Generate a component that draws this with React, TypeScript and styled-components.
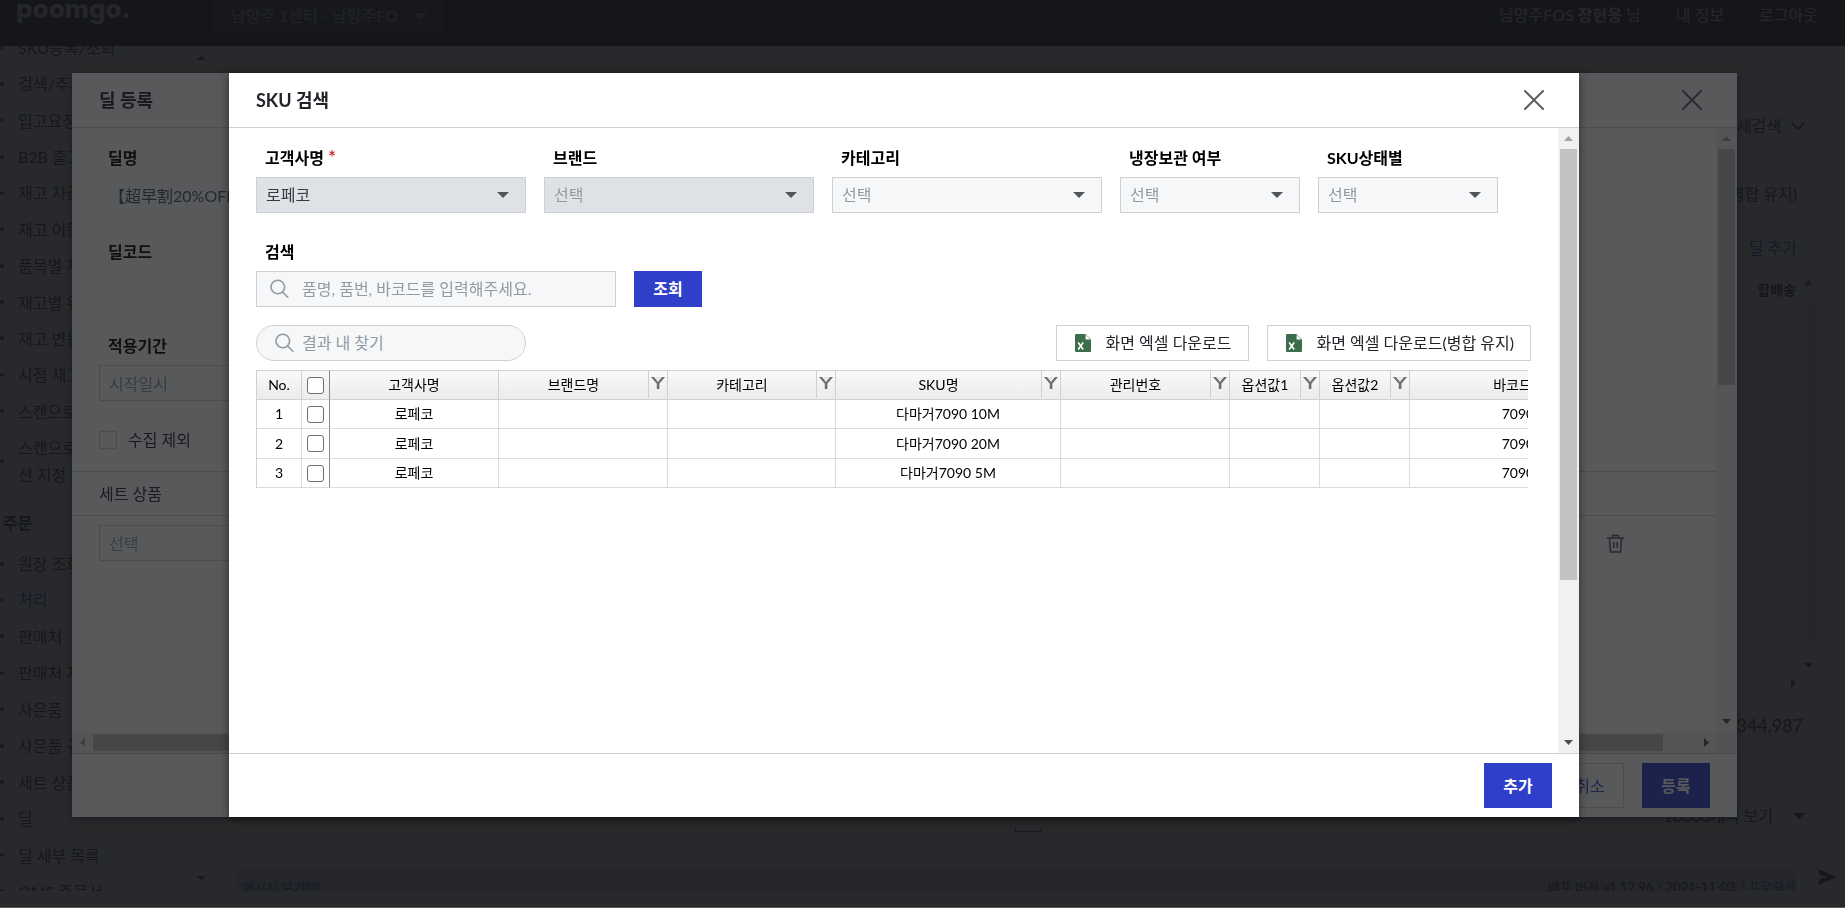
import React from "react";
import styled, { createGlobalStyle, css } from "styled-components";

const FONT = `Lato, "Noto Sans CJK KR", "Noto Sans CJK JP", sans-serif`;

const GlobalStyle = createGlobalStyle`
  *, *::before, *::after { box-sizing: border-box; }
  body {
    margin: 0;
    background: #fff;
    color: #212529;
    font: 16px/24px ${FONT};
    overflow: hidden;
  }
  button, input, select { font: inherit; color: inherit; margin: 0; }
  button { cursor: pointer; }
  ul { margin: 0; padding: 0; list-style: none; }
  a { color: inherit; text-decoration: none; }
  h2, h3, p { margin: 0; font-weight: 400; }
`;

/* ---------- page behind the dialogs ---------- */

const Page = styled.div`
  display: flex;
  flex-direction: column;
  height: 100vh;
  overflow: hidden;
`;

const TopBar = styled.header`
  flex: none;
  display: flex;
  align-items: flex-start;
  height: 46px;
  padding: 0 27px 0 16px;
  background: #16181c;
  color: #e4e6e8;
`;

const Logo = styled.a`
  width: 197px;
  margin-top: -8px;
  color: #ced4da;
  font: 800 26px/34px Inter, sans-serif;
`;

const CenterSelect = styled.div`
  display: grid;
  width: 230px;
  height: 31px;
  background: #343a40;

  > * { grid-area: 1 / 1; }
  > svg { place-self: center end; margin-right: 16px; }

  select {
    appearance: none;
    border: 0;
    padding: 0 18px;
    background: none;
    color: #adb5bd;
  }
`;

const UserLinks = styled.nav`
  display: flex;
  gap: 35px;
  margin-left: auto;
  padding-top: 3px;

  b { font-weight: 700; }
`;

const Columns = styled.div`
  flex: 1;
  min-height: 0;
  display: flex;
  padding-bottom: 17px;
`;

const Sidebar = styled.nav`
  flex: none;
  display: flex;
  width: 222px;
  overflow: hidden;
`;

const Menu = styled.div`
  flex: 1;
  margin-top: -12px;
`;

const MenuList = styled.ul<{ $height: number }>`
  display: flex;
  flex-direction: column;
  justify-content: space-between;
  height: ${(p) => p.$height}px;
`;

const MenuItem = styled.li<{ $active?: boolean }>`
  display: flex;
  align-items: center;
  gap: 14px;
  line-height: 27px;
  color: ${(p) => (p.$active ? "#303fc9" : "#212529")};
  white-space: pre-line;

  &::before {
    content: "";
    width: 4px;
    height: 4px;
    border-radius: 2px;
    background: #495057;
  }
`;

const MenuTitle = styled.h3`
  padding: 21px 0 14px 3px;
  font-size: 16px;
  font-weight: 700;
  line-height: 27px;
`;

const MenuArrows = styled.div`
  display: flex;
  flex-direction: column;
  justify-content: space-between;
  width: 26px;
  padding: 7px 0 8px;
`;

const Content = styled.main`
  flex: 1;
  min-width: 0;
  display: flex;
  flex-direction: column;
  align-items: flex-end;
  padding: 68px 48px 0 14px;
  position: relative;
`;

const ContentLine = styled.div<{ $gap?: number; $blue?: boolean }>`
  display: flex;
  align-items: center;
  gap: 10px;
  margin-bottom: ${(p) => p.$gap ?? 0}px;
  color: ${(p) => (p.$blue ? "#303fc9" : "#212529")};

  button { border: 0; padding: 0; background: none; }
`;

const DetailToggle = styled(ContentLine)`
  margin-right: -8px;
`;

const GridArea = styled.div`
  flex: 1;
  align-self: stretch;
  display: flex;
  justify-content: flex-end;
  margin-right: -20px;
  font-size: 14px;
  font-weight: 700;
`;

const GridRail = styled.div`
  display: flex;
  flex-direction: column;
  align-items: center;
  gap: 10px;
  width: 17px;
  margin-left: 4px;
  padding-bottom: 8px;

  &::after {
    content: "";
    order: 1;
    flex: 1;
    width: 15px;
    border-radius: 6px;
    background: #dee2e6;
  }

  svg:last-child { order: 2; }
`;

const GridRight = styled.div`
  display: flex;
  height: 35px;
`;

const Total = styled.p`
  font-size: 18px;
  margin: 0 -6px 67px 0;
`;

const PageSize = styled(ContentLine)`
  gap: 20px;
  margin-right: -8px;
`;

const PagerBox = styled.div`
  align-self: center;
  width: 27px;
  height: 4px;
  margin: 0 -24px 38px 0;
  border: 1px solid #495057;
  border-top: 0;
`;

const StatusBar = styled.footer`
  flex: none;
  align-self: stretch;
  display: flex;
  justify-content: space-between;
  height: 21px;
  padding: 5px 1px 0 6px;
  overflow: hidden;
  background: #ced4da;
  font-size: 13px;
  line-height: 24px;

  a { color: #303fc9; }
`;

const SendButton = styled.button`
  position: absolute;
  right: 8px;
  bottom: 5px;
  display: flex;
  padding: 0;
  border: 0;
  background: none;
`;

/* ---------- dialogs ---------- */

const Backdrop = styled.div<{ $full?: boolean }>`
  position: fixed;
  inset: 0 0 ${(p) => (p.$full ? 0 : 1)}px;
  display: flex;
  justify-content: center;
  padding: 73px ${(p) => (p.$full ? "36px 91px" : "37px 90px")} 0;
  background: rgba(21, 22, 25, 0.713);
`;

const Dialog = styled.section<{ $max?: number }>`
  display: flex;
  flex-direction: column;
  width: calc(100% - 144px);
  max-width: ${(p) => (p.$max ? `${p.$max}px` : "none")};
  background: #fff;
  box-shadow: 0 2px 9px rgba(0, 0, 0, 0.5);
`;

const DialogHeader = styled.header`
  flex: none;
  display: flex;
  align-items: center;
  justify-content: space-between;
  height: 55px;
  padding: 0 35px 0 27px;
  border-bottom: 1px solid #ced0d2;

  h2 { font-size: 18px; font-weight: 700; line-height: 27px; }
  button { display: flex; padding: 0; border: 0; background: none; }
`;

const DialogMain = styled.div`
  flex: 1;
  min-height: 0;
  display: flex;
`;

const DialogBody = styled.div`
  flex: 1;
  min-width: 0;
  padding: 18px 27px 0;
  overflow: hidden;
`;

const DialogFooter = styled.footer`
  flex: none;
  display: flex;
  justify-content: flex-end;
  gap: 18px;
  height: 64px;
  padding: 9px 27px;
  border-top: 1px solid #ced0d2;
`;

const Button = styled.button<{ $outline?: boolean; $tall?: boolean }>`
  width: 68px;
  height: ${(p) => (p.$tall ? 45 : 36)}px;
  padding: 0;
  border: 1px solid #303fc9;
  background: #303fc9;
  color: #fff;
  font-weight: 700;
  ${(p) =>
    p.$outline &&
    css`
      border-color: #ced0d2;
      background: #fff;
      color: #303fc9;
      font-weight: 400;
    `}
`;

const FieldRow = styled.div`
  display: flex;
  align-items: flex-end;
  gap: 18px;
  margin-bottom: 27px;
`;

const SearchRow = styled(FieldRow)`
  margin-bottom: 18px;
`;

const Field = styled.div<{ $width: number }>`
  width: ${(p) => p.$width}px;

  > label {
    display: block;
    padding-left: 9px;
    margin-bottom: 7px;
    color: #000;
    font-weight: 700;
  }
  em { color: #d0342c; font-size: 18px; font-style: normal; line-height: 16px; }
`;

const SelectBox = styled.div`
  display: grid;
  height: 36px;

  > * { grid-area: 1 / 1; }
  > svg { place-self: center end; margin-right: 17px; pointer-events: none; }
`;

const Select = styled.select<{ $empty?: boolean }>`
  appearance: none;
  width: 100%;
  padding: 0 9px;
  border: 1px solid #ced0d2;
  border-radius: 0;
  background: #f6f7f8;
  color: ${(p) => (p.$empty ? "#94999e" : "#343a40")};

  &:disabled { background: #dee2e6; opacity: 1; }
`;

const TextInput = styled.input<{ $bare?: boolean }>`
  width: 100%;
  height: 36px;
  padding: 0 9px;
  border: 1px solid ${(p) => (p.$bare ? "transparent" : "#ced0d2")};
  background: ${(p) => (p.$bare ? "#fdfdfd" : "#fff")};
  color: #495057;

  &::placeholder { color: #94999e; opacity: 1; }
`;

const SearchBox = styled.div<{ $pill?: boolean }>`
  display: flex;
  align-items: center;
  gap: ${(p) => (p.$pill ? 7 : 12)}px;
  width: ${(p) => (p.$pill ? "270px" : "100%")};
  height: 36px;
  padding: 0 ${(p) => (p.$pill ? 18 : 13)}px;
  border: 1px solid #ced0d2;
  border-radius: ${(p) => (p.$pill ? 18 : 0)}px;
  background: #f6f7f8;

  svg { flex: none; }
  input {
    flex: 1;
    min-width: 0;
    padding: 0;
    border: 0;
    outline: 0;
    background: none;
  }
  input::placeholder { color: #94999e; opacity: 1; }
`;

const Toolbar = styled.div`
  display: flex;
  gap: 18px;
  margin-bottom: 9px;

  > :first-child { margin-right: auto; }
`;

const ExcelButton = styled.button`
  display: flex;
  align-items: center;
  gap: 13px;
  height: 36px;
  padding: 0 16px;
  border: 1px solid #ced0d2;
  background: #fff;
  white-space: nowrap;
`;

const TableWrap = styled.div`
  margin-right: 3px;
  overflow: hidden;
`;

const Table = styled.table`
  width: 1379px;
  table-layout: fixed;
  border-collapse: separate;
  border-spacing: 0;
  border-left: 1px solid #ced0d2;
  color: #000;
  font-size: 14px;
  line-height: 20px;
  text-align: center;

  th, td {
    height: 29px;
    padding: 0;
    border: 0 solid #dadcde;
    border-width: 0 1px 1px 0;
    font-weight: 400;
  }
  tr:nth-child(even) td { height: 30px; }
  th {
    height: 30px;
    border-color: #ced0d2;
    border-top-width: 1px;
    background: linear-gradient(#f9f9f9, #ececec);
  }
  th:nth-child(2), td:nth-child(2) { border-right-color: #87898b; }
`;

const HeadCell = styled.div`
  display: flex;
  align-items: center;
  height: 28px;

  span { flex: 1; }
  button {
    flex: none;
    display: flex;
    align-items: center;
    justify-content: center;
    align-self: stretch;
    width: 19px;
    margin-bottom: 1px;
    padding: 0 0 3px;
    border: 0;
    border-left: 1px solid #ced0d2;
    background: none;
  }
`;

const Checkbox = styled.input.attrs({ type: "checkbox" })<{ $square?: boolean }>`
  appearance: none;
  display: block;
  width: ${(p) => (p.$square ? 18 : 17)}px;
  height: ${(p) => (p.$square ? 18 : 17)}px;
  margin: 0 auto;
  border: 1px solid ${(p) => (p.$square ? "#ced0d2" : "#6f6f6f")};
  border-radius: ${(p) => (p.$square ? 0 : 3)}px;
  background: #fff;
`;

const CheckRow = styled.div`
  display: flex;
  align-items: center;
  gap: 11px;
  height: 24px;
  margin-bottom: 19px;

  input { margin: 0; }
`;

const SetHeading = styled.h3`
  margin: 0 -27px 9px;
  padding: 9px 27px;
  border: 1px solid #ced0d2;
  border-width: 1px 0;
  font-size: 16px;
  line-height: 25px;
`;

const SetRow = styled.div`
  display: flex;
  align-items: center;
  justify-content: space-between;
  padding-right: 65px;

  button { display: flex; padding: 0; border: 0; background: none; }
`;

/* ---------- scroll bars ---------- */

const Track = styled.div<{ $row?: boolean }>`
  flex: none;
  display: flex;
  flex-direction: ${(p) => (p.$row ? "row" : "column")};
  ${(p) => (p.$row ? "height: 21px;" : "width: 21px;")}
  background: #f1f1f1;

  > svg { flex: none; margin: ${(p) => (p.$row ? "5px 6px" : "6px 5px")}; }
`;

const Rail = styled.div<{ $row?: boolean; $size: number }>`
  flex: 1;
  min-width: 0;
  min-height: 0;

  &::before {
    content: "";
    display: block;
    background: #c1c1c1;
    ${(p) =>
      p.$row
        ? css`width: ${p.$size}%; height: 17px; margin-top: 2px;`
        : css`height: ${p.$size}%; width: 17px; margin-left: 2px;`}
  }
`;

const ScrollColumn = styled.div`
  flex: 1;
  min-height: 0;
  display: flex;
  flex-direction: column;
`;

const BottomTrack = styled.div`
  display: flex;
  background: #e6e6e6;
  padding-right: 21px;

  > div { flex: 1; }
`;

type Dir = "up" | "down" | "left" | "right";
const ARROWS: Record<Dir, string> = {
  up: "1,7 10,7 5.5,2",
  down: "1,2 10,2 5.5,7",
  left: "7,1 7,10 2,5.5",
  right: "3,1 3,10 8,5.5",
};

const Arrow = ({ dir, color = "#505050" }: { dir: Dir; color?: string }) => {
  const vertical = dir === "up" || dir === "down";
  return (
    <svg width={vertical ? 11 : 9} height={vertical ? 9 : 11} fill={color} aria-hidden>
      <polygon points={ARROWS[dir]} />
    </svg>
  );
};

const ScrollBar = ({ size, row }: { size: number; row?: boolean }) => (
  <Track $row={row}>
    <Arrow dir={row ? "left" : "up"} color="#a3a3a3" />
    <Rail $size={size} $row={row} />
    <Arrow dir={row ? "right" : "down"} />
  </Track>
);

/* ---------- icons ---------- */

const Caret = ({ color = "#50555a" }: { color?: string }) => (
  <svg width="12" height="6" fill={color} aria-hidden>
    <path d="M0 0h12L6 6z" />
  </svg>
);

const CloseIcon = () => (
  <svg width="20" height="20" stroke="#5c5f62" strokeWidth="2" strokeLinecap="round" aria-hidden>
    <path d="M1 1l18 18M19 1L1 19" />
  </svg>
);

const SearchIcon = () => (
  <svg width="20" height="20" fill="none" stroke="#94999e" strokeWidth="1.6" strokeLinecap="round" aria-hidden>
    <circle cx="7.800" cy="8" r="6.800" />
    <path d="M12.600 13l5.200 5.200" />
  </svg>
);

const ExcelIcon = () => (
  <svg width="20" height="20" aria-hidden>
    <path d="M3 1h9.500L18 6.500V18a1 1 0 0 1-1 1H3a1 1 0 0 1-1-1V2a1 1 0 0 1 1-1z" fill="#3d6e4c" />
    <path d="M12.600 1.600v4.800h4.800z" fill="#fff" />
    <path d="M5.200 9.500l5 7M10.200 9.500l-5 7" stroke="#fff" strokeWidth="1.600" />
  </svg>
);

const FilterIcon = () => (
  <svg width="14" height="12" aria-hidden>
    <path d="M0 0h3.200L7 4.800 10.800 0H14L8.400 6.800V12H5.800V6.800z" fill="#6d6f71" />
    <path d="M3.200 0h7.600L7 4.800z" fill="#e6e7e8" />
  </svg>
);

const TrashIcon = () => (
  <svg width="17" height="19" fill="none" stroke="#50555a" strokeWidth="1.5" aria-hidden>
    <path d="M0 4h17M5.500 4V1.500h6V4M2.500 4l1 14h10l1-14M6.800 8v6M10.200 8v6" />
  </svg>
);

const SendIcon = () => (
  <svg width="20" height="18" fill="#212529" aria-hidden>
    <path d="M1 1l18 8L1 17l2-6 8-2-8-2z" />
  </svg>
);

/* ---------- data ---------- */

const STOCK_MENU = [
  "SKU등록/조회", "검색/추가", "입고요청", "B2B 출고", "재고 차감", "재고 이동",
  "품목별 재고", "재고별 위치", "재고 변동", "시점 재고", "스캔으로", "스캔으로\n션 지정",
];
const ORDER_MENU = [
  "원장 조회", "처리", "판매처", "판매처 지정", "사은품", "사은품 규칙",
  "세트 상품", "딜", "딜 세부 목록", "OMS 주문서",
];

const FILTERS = [
  { id: "customer", label: "고객사명", width: 270, value: "로페코", required: true, disabled: true },
  { id: "brand", label: "브랜드", width: 270, disabled: true },
  { id: "category", label: "카테고리", width: 270 },
  { id: "cold", label: "냉장보관 여부", width: 180 },
  { id: "status", label: "SKU상태별", width: 180 },
];

const COLUMNS = [
  { title: "고객사명", width: 169, filter: false },
  { title: "브랜드명", width: 169, filter: true },
  { title: "카테고리", width: 168, filter: true },
  { title: "SKU명", width: 225, filter: true },
  { title: "관리번호", width: 169, filter: true },
  { title: "옵션값1", width: 90, filter: true },
  { title: "옵션값2", width: 90, filter: true },
  { title: "바코드", width: 225, filter: true },
];

const ROWS = ["다마거7090 10M", "다마거7090 20M", "다마거7090 5M"].map((sku) => [
  "로페코", "", "", sku, "", "", "", "70900",
]);

/* ---------- sections ---------- */

const DropDown = ({ id, value, disabled }: { id: string; value?: string; disabled?: boolean }) => (
  <SelectBox>
    <Select id={id} $empty={!value} disabled={disabled}>
      <option>{value ?? "선택"}</option>
    </Select>
    <Caret />
  </SelectBox>
);

const BackgroundPage = () => (
  <Page>
    <TopBar>
      <Logo href="#">poomgo.</Logo>
      <CenterSelect>
        <select aria-label="센터">
          <option>남양주 1센터 - 남양주FO</option>
        </select>
        <Caret color="#868e96" />
      </CenterSelect>
      <UserLinks>
        <span>남양주FOS <b>장현웅</b> 님</span>
        <a href="#">내 정보</a>
        <a href="#">로그아웃</a>
      </UserLinks>
    </TopBar>
    <Columns>
      <Sidebar>
        <Menu>
          <MenuList $height={454}>
            {STOCK_MENU.map((name) => (
              <MenuItem key={name}><a href="#">{name}</a></MenuItem>
            ))}
          </MenuList>
          <MenuTitle>주문</MenuTitle>
          <MenuList $height={355}>
            {ORDER_MENU.map((name) => (
              <MenuItem key={name} $active={name === "처리"}><a href="#">{name}</a></MenuItem>
            ))}
          </MenuList>
        </Menu>
        <MenuArrows>
          <Arrow dir="up" />
          <Arrow dir="down" />
        </MenuArrows>
      </Sidebar>
      <Content>
        <DetailToggle $gap={44}>
          <button>상세검색</button>
          <svg width="14" height="8" fill="none" stroke="#212529" strokeWidth="1.5" aria-hidden>
            <path d="M1 1l6 6 6-6" />
          </svg>
        </DetailToggle>
        <ContentLine $gap={30}><button>화면 엑셀 다운로드(병합 유지)</button></ContentLine>
        <ContentLine $gap={18} $blue><button>딜 추가</button></ContentLine>
        <GridArea>
          합배송
          <GridRail>
            <Arrow dir="up" />
            <Arrow dir="down" />
          </GridRail>
        </GridArea>
        <GridRight><Arrow dir="right" /></GridRight>
        <Total>1,344,987</Total>
        <PageSize>
          10000개씩 보기
          <Caret color="#212529" />
        </PageSize>
        <PagerBox />
        <StatusBar>
          <a href="#">메시지 보기(0)</a>
          <span>배포 버전 v1.12.96 / 2021-11-03 / <a href="#">프로덕션</a></span>
        </StatusBar>
        <SendButton aria-label="보내기"><SendIcon /></SendButton>
      </Content>
    </Columns>
  </Page>
);

const DealDialog = () => (
  <Dialog role="dialog" aria-label="딜 등록">
    <DialogHeader>
      <h2>딜 등록</h2>
      <button aria-label="닫기"><CloseIcon /></button>
    </DialogHeader>
    <ScrollColumn>
      <DialogMain>
        <DialogBody>
          <FieldRow>
            <Field $width={540}>
              <label htmlFor="deal-name">딜명</label>
              <TextInput id="deal-name" $bare readOnly value="【超早割20%OFF】" />
            </Field>
          </FieldRow>
          <FieldRow>
            <Field $width={540}>
              <label htmlFor="deal-code">딜코드</label>
              <TextInput id="deal-code" $bare readOnly value="" />
            </Field>
          </FieldRow>
          <FieldRow>
            <Field $width={270}>
              <label htmlFor="period">적용기간</label>
              <TextInput id="period" placeholder="시작일시" />
            </Field>
          </FieldRow>
          <CheckRow>
            <Checkbox id="exclude" $square />
            <label htmlFor="exclude">수집 제외</label>
          </CheckRow>
          <SetHeading>세트 상품</SetHeading>
          <SetRow>
            <Field $width={270}>
              <TextInput aria-label="세트 상품" placeholder="선택" />
            </Field>
            <button aria-label="삭제"><TrashIcon /></button>
          </SetRow>
        </DialogBody>
        <ScrollBar size={42} />
      </DialogMain>
      <BottomTrack>
        <div><ScrollBar row size={98} /></div>
      </BottomTrack>
    </ScrollColumn>
    <DialogFooter>
      <Button $tall $outline>취소</Button>
      <Button $tall>등록</Button>
    </DialogFooter>
  </Dialog>
);

const SkuTable = () => (
  <TableWrap>
    <Table>
      <colgroup>
        <col style={{ width: 45 }} />
        <col style={{ width: 28 }} />
        {COLUMNS.map((c) => (
          <col key={c.title} style={{ width: c.width }} />
        ))}
      </colgroup>
      <thead>
        <tr>
          <th>No.</th>
          <th><Checkbox aria-label="전체 선택" /></th>
          {COLUMNS.map((c) => (
            <th key={c.title}>
              <HeadCell>
                <span>{c.title}</span>
                {c.filter && <button aria-label={`${c.title} 필터`}><FilterIcon /></button>}
              </HeadCell>
            </th>
          ))}
        </tr>
      </thead>
      <tbody>
        {ROWS.map((row, i) => (
          <tr key={i}>
            <td>{i + 1}</td>
            <td><Checkbox aria-label={`${i + 1}행 선택`} /></td>
            {row.map((cell, j) => (
              <td key={j}>{cell}</td>
            ))}
          </tr>
        ))}
      </tbody>
    </Table>
  </TableWrap>
);

const SkuDialog = () => (
  <Dialog $max={1350} role="dialog" aria-label="SKU 검색">
    <DialogHeader>
      <h2>SKU 검색</h2>
      <button aria-label="닫기"><CloseIcon /></button>
    </DialogHeader>
    <DialogMain>
      <DialogBody>
        <FieldRow>
          {FILTERS.map((f) => (
            <Field key={f.id} $width={f.width}>
              <label htmlFor={f.id}>
                {f.label}
                {f.required && <em> *</em>}
              </label>
              <DropDown id={f.id} value={f.value} disabled={f.disabled} />
            </Field>
          ))}
        </FieldRow>
        <SearchRow>
          <Field $width={360}>
            <label htmlFor="keyword">검색</label>
            <SearchBox>
              <SearchIcon />
              <input id="keyword" placeholder="품명, 품번, 바코드를 입력해주세요." />
            </SearchBox>
          </Field>
          <Button>조회</Button>
        </SearchRow>
        <Toolbar>
          <SearchBox $pill>
            <SearchIcon />
            <input aria-label="결과 내 찾기" placeholder="결과 내 찾기" />
          </SearchBox>
          <ExcelButton><ExcelIcon />화면 엑셀 다운로드</ExcelButton>
          <ExcelButton><ExcelIcon />화면 엑셀 다운로드(병합 유지)</ExcelButton>
        </Toolbar>
        <SkuTable />
      </DialogBody>
      <ScrollBar size={74} />
    </DialogMain>
    <DialogFooter>
      <Button $tall>추가</Button>
    </DialogFooter>
  </Dialog>
);

export default function App() {
  return (
    <>
      <GlobalStyle />
      <BackgroundPage />
      <Backdrop $full><DealDialog /></Backdrop>
      <Backdrop><SkuDialog /></Backdrop>
    </>
  );
}
